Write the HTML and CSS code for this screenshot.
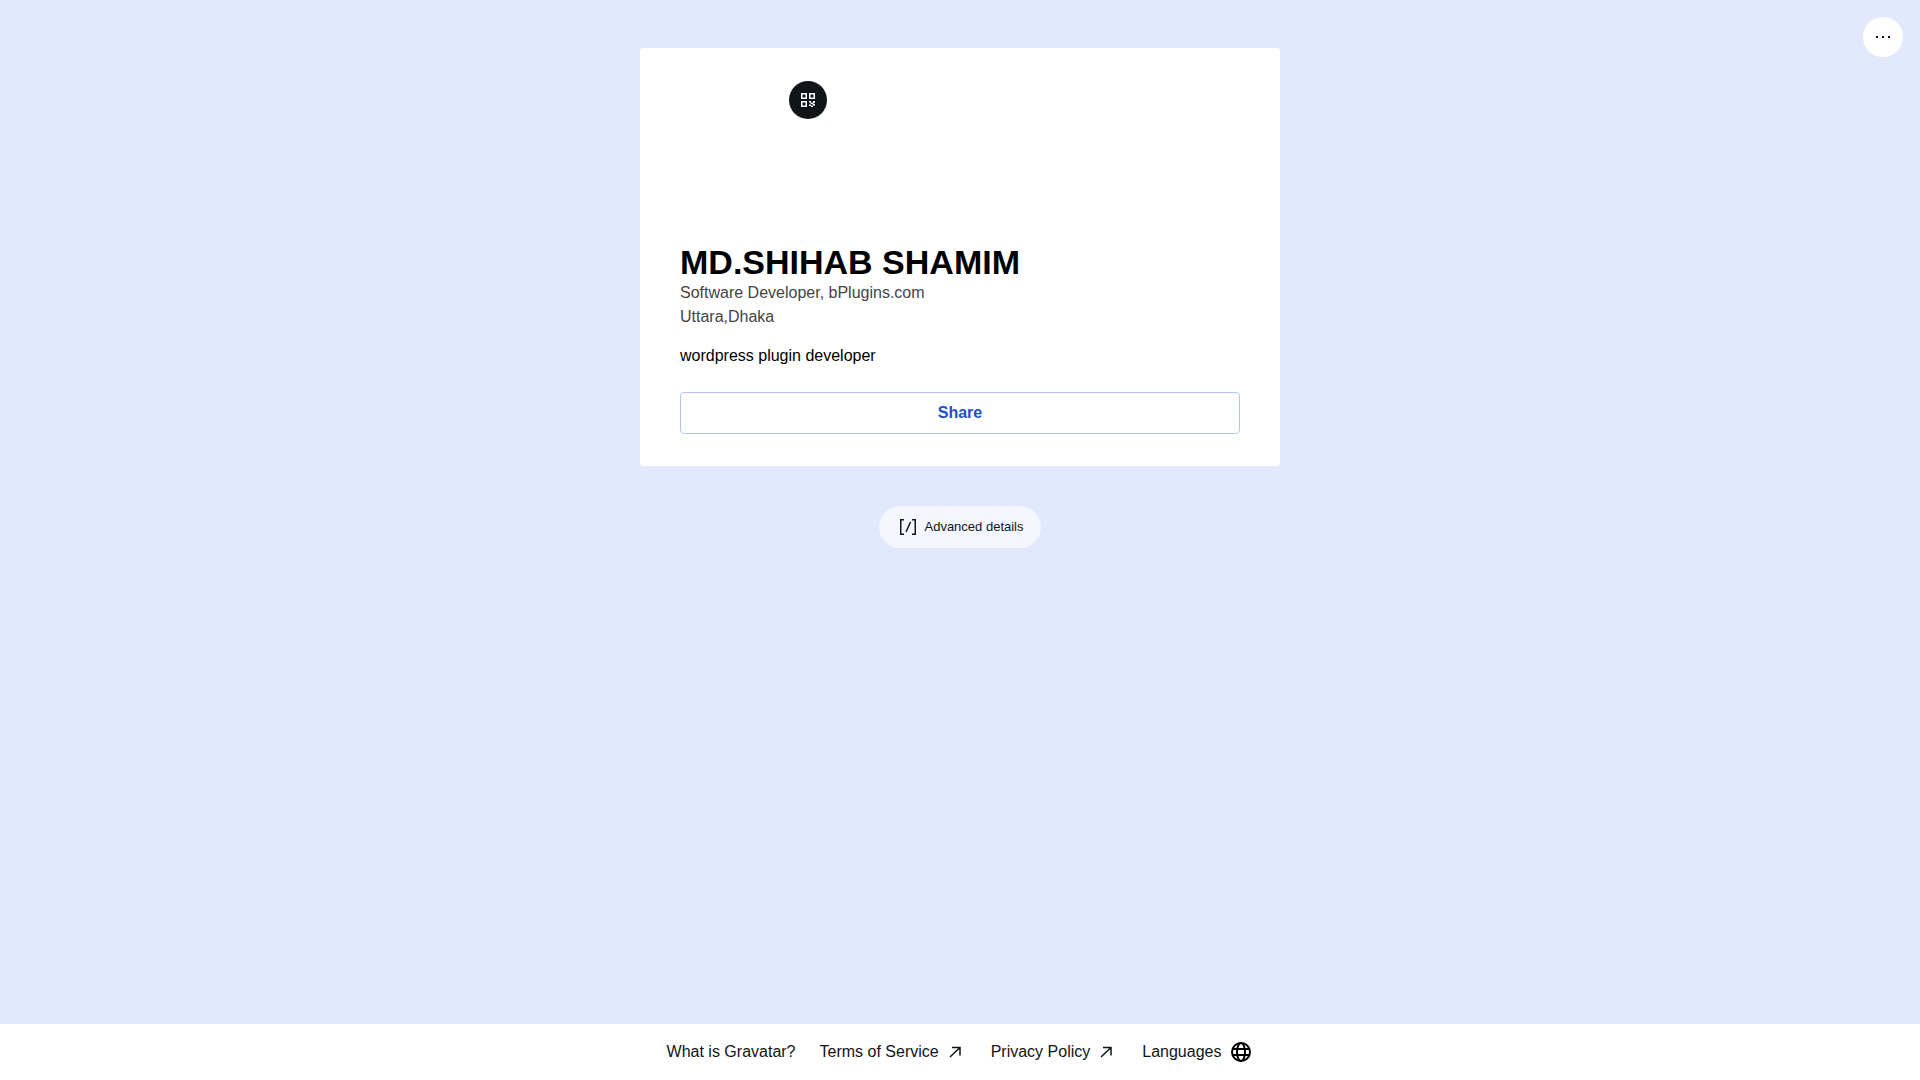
FILE: index.html
```html
<!DOCTYPE html>
<html lang="en">
<head>
    <meta charset="UTF-8">
    <meta name="viewport" content="width=device-width, initial-scale=1.0">
    <title>MD.SHIHAB SHAMIM</title>
    <link rel="stylesheet" href="styles.css">
</head>
<body>
    <!-- Profile menu -->
    <button class="menu-btn" type="button">
        <svg width="24" height="24" viewBox="0 0 24 24" fill="currentColor">
            <path d="M5 11h2v2H5zM11 11h2v2h-2zM17 11h2v2h-2z"/>
        </svg>
    </button>

    <main class="profile">
        <div class="card">
            <!-- Avatar with QR code button -->
            <div class="avatar">
                <button class="qr-btn" type="button">
                    <svg width="14" height="14" viewBox="0 0 14 14" fill="currentColor">
                        <path fill-rule="evenodd" d="M0 0h6v6H0zM1.5 1.5v3h3v-3zM8 0h6v6H8zM9.5 1.5v3h3v-3zM0 8h6v6H0zM1.5 9.5v3h3v-3z"/>
                        <path d="M8 8h2v1.5H8zM9.5 9.5h2V11h-2zM12 8h2v2h-2zM11 10h1.5v1.5H11zM8 11.5h2V13H8zM10 12.5h2V14h-2zM12 11h2v1.5h-2z"/>
                    </svg>
                </button>
            </div>

            <h1>MD.SHIHAB SHAMIM</h1>
            <p class="info">Software Developer, bPlugins.com</p>
            <p class="info">Uttara,Dhaka</p>
            <p class="about">wordpress plugin developer</p>
            <button class="share-btn" type="button">Share</button>
        </div>

        <button class="details-btn" type="button">
            <svg width="24" height="24" viewBox="0 0 24 24" fill="none" stroke="currentColor" stroke-width="1.5">
                <path d="M8 4.75H4.75v14.5H8M16 4.75h3.25v14.5H16M14.5 7l-4.5 10"/>
            </svg>
            Advanced details
        </button>
    </main>

    <footer class="footer">
        <a href="#">What is Gravatar?</a>
        <a href="#">Terms of Service
            <svg width="24" height="24" viewBox="0 0 24 24" fill="none" stroke="currentColor" stroke-width="1.5">
                <path d="M7 17L17 7.5M9 7.5h8v8"/>
            </svg>
        </a>
        <a href="#">Privacy Policy
            <svg width="24" height="24" viewBox="0 0 24 24" fill="none" stroke="currentColor" stroke-width="1.5">
                <path d="M7 17L17 7.5M9 7.5h8v8"/>
            </svg>
        </a>
        <button class="lang-btn" type="button">Languages
            <svg width="24" height="24" viewBox="0 0 24 24" fill="none" stroke="#000" stroke-width="2">
                <circle cx="12" cy="12" r="9"/>
                <ellipse cx="12" cy="12" rx="4" ry="9"/>
                <path d="M3.5 9h17M3.5 15h17"/>
            </svg>
        </button>
    </footer>
</body>
</html>
```

FILE: styles.css
```css
* {
    box-sizing: border-box;
}

body {
    margin: 0;
    min-height: 100vh;
    display: flex;
    flex-direction: column;
    background-color: #e3e9fc;
    color: #000;
    font-family: Helvetica, Arial, "Liberation Sans", sans-serif;
    font-size: 16px;
    line-height: 24px;
}

button {
    border: none;
    font-family: inherit;
    font-size: 16px;
    line-height: 24px;
    cursor: pointer;
}

h1,
p {
    margin: 0;
}

.menu-btn {
    position: absolute;
    top: 17px;
    right: 17px;
    display: flex;
    align-items: center;
    justify-content: center;
    width: 40px;
    height: 40px;
    padding: 0;
    border-radius: 50%;
    background-color: white;
    color: #101517;
}

.profile {
    flex: 1;
    display: flex;
    flex-direction: column;
    align-items: center;
    gap: 40px;
    padding: 48px 16px;
}

.card {
    width: 100%;
    max-width: 640px;
    padding: 32px 40px;
    border-radius: 4px;
    background-color: white;
}

/* Avatar */
.avatar {
    position: relative;
    width: 148px;
    height: 148px;
    margin-bottom: 16px;
}

.qr-btn {
    position: absolute;
    top: 1px;
    right: 1px;
    display: flex;
    align-items: center;
    justify-content: center;
    width: 38px;
    height: 38px;
    padding: 0;
    border-radius: 50%;
    background-color: #101517;
    color: white;
}

h1 {
    font-size: 34px;
    line-height: 37px;
}

.info {
    color: #444;
}

.about {
    margin: 15px 0 24px;
}

.share-btn {
    display: block;
    width: 100%;
    padding: 8px;
    border: 1px solid #afc4ee;
    border-radius: 4px;
    background-color: white;
    color: #1d4fc4;
    font-weight: bold;
}

.details-btn {
    display: flex;
    align-items: center;
    gap: 4px;
    height: 42px;
    padding: 0 17px;
    border-radius: 21px;
    background-color: #f4f7fe;
    color: #101517;
    font-size: 13px;
}

/* Footer links */
.footer {
    display: flex;
    flex-wrap: wrap;
    justify-content: center;
    gap: 24px;
    padding: 16px;
    background-color: white;
}

.footer a,
.lang-btn {
    display: flex;
    align-items: center;
    gap: 4px;
    color: #101517;
    text-decoration: none;
}

.footer a {
    gap: 4px;
}

.lang-btn {
    gap: 8px;
    padding: 0;
    background: none;
}
```
